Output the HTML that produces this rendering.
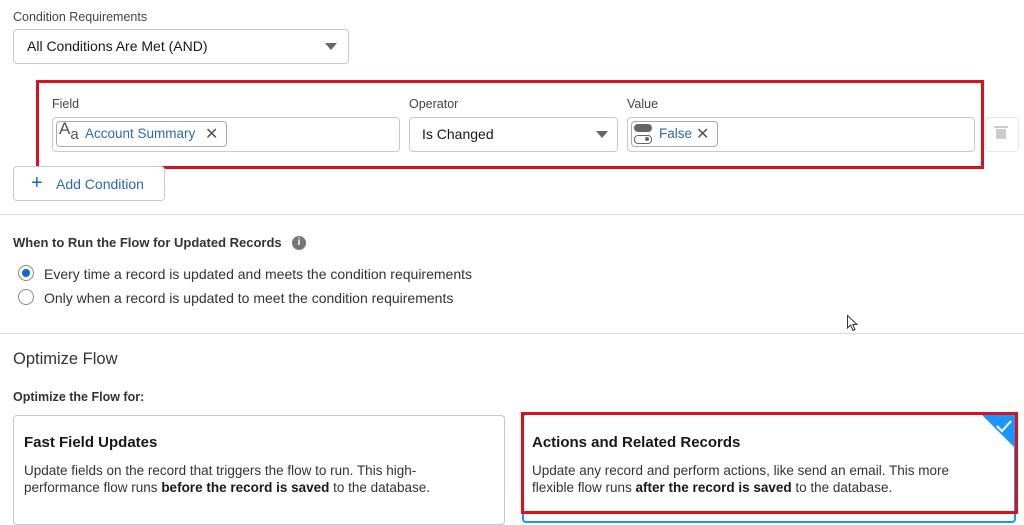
<!DOCTYPE html>
<html><head><style>
body{margin:0;width:1024px;height:520px;overflow:hidden;background:#fff;font-family:"Liberation Sans",sans-serif;color:#181818;position:relative}
.a{position:absolute}
.lbl{font-size:12.5px;color:#444}
.box{border:1px solid #c9c9c9;border-radius:4px;background:#fff;box-sizing:border-box}
.pill{border:1px solid #aaa;border-radius:4px;box-sizing:border-box;font-size:13.5px;color:#2c6aa8}
.arrow{width:0;height:0;border-left:6px solid transparent;border-right:6px solid transparent;border-top:7px solid #666}
.x{color:#555;font-size:16px}
</style></head><body>
<div class="a lbl" style="left:13px;top:10px">Condition Requirements</div>
<div class="a box" style="left:13px;top:29px;width:336px;height:35px"></div>
<div class="a" style="left:27px;top:38px;font-size:14px">All Conditions Are Met (AND)</div>
<div class="a arrow" style="left:325px;top:43px"></div>

<div class="a" style="left:36px;top:80px;width:948px;height:89px;border:3px solid #d9111c;box-sizing:border-box"></div>
<div class="a lbl" style="left:52px;top:97px">Field</div>
<div class="a lbl" style="left:409px;top:97px">Operator</div>
<div class="a lbl" style="left:627px;top:97px">Value</div>
<div class="a box" style="left:52px;top:117px;width:348px;height:35px"></div>
<div class="a pill" style="left:56px;top:121px;width:171px;height:26px"></div>
<div class="a" style="left:59px;top:119px;font-size:17px;color:#555">A<span style="font-size:15px;position:relative;top:5px">a</span></div>
<div class="a" style="left:85px;top:126px;font-size:13.5px;color:#2c6aa8">Account Summary</div>
<div class="a x" style="left:205px;top:124px">✕</div>
<div class="a box" style="left:409px;top:117px;width:209px;height:35px"></div>
<div class="a" style="left:422px;top:126px;font-size:14px">Is Changed</div>
<div class="a arrow" style="left:596px;top:131px"></div>
<div class="a box" style="left:627px;top:117px;width:348px;height:35px"></div>
<div class="a pill" style="left:631px;top:121px;width:87px;height:26px"></div>
<div class="a" style="left:634px;top:124px;width:18px;height:8px;background:#666;border-radius:4px"></div>
<div class="a" style="left:634px;top:135px;width:16px;height:7px;border:1px solid #666;border-radius:4px"></div>
<div class="a" style="left:645px;top:137px;width:4px;height:4px;background:#666;border-radius:2px"></div>
<div class="a" style="left:659px;top:126px;font-size:13.5px;color:#2c6aa8">False</div>
<div class="a x" style="left:696px;top:124px">✕</div>
<div class="a box" style="left:985px;top:117px;width:34px;height:35px;border-color:#e5e5e5"></div>
<div class="a" style="left:996px;top:129px;width:10px;height:10px;background:#ccc;border-radius:1px"></div>
<div class="a" style="left:994px;top:126px;width:14px;height:2px;background:#ccc"></div>

<div class="a box" style="left:13px;top:166px;width:152px;height:35px;border-color:#c9c9c9"></div>
<div class="a" style="left:31px;top:172px;font-size:20px;color:#0b6bc8">+</div>
<div class="a" style="left:56px;top:176px;font-size:14px;color:#2c6aa8">Add Condition</div>

<div class="a" style="left:0;top:214px;width:1024px;height:1px;background:#ddd"></div>
<div class="a" style="left:13px;top:235px;font-size:13px;font-weight:bold;color:#333">When to Run the Flow for Updated Records</div>
<div class="a" style="left:292px;top:236px;width:14px;height:14px;border-radius:50%;background:#777;color:#fff;font-size:10px;text-align:center;line-height:14px;font-weight:bold">i</div>
<div class="a" style="left:18px;top:265px;width:16px;height:16px;border:1px solid #888;border-radius:50%;box-sizing:border-box"></div>
<div class="a" style="left:22px;top:269px;width:8px;height:8px;border-radius:50%;background:#0b6bc8"></div>
<div class="a" style="left:44px;top:266px;font-size:14px;color:#333">Every time a record is updated and meets the condition requirements</div>
<div class="a" style="left:18px;top:289px;width:16px;height:16px;border:1px solid #888;border-radius:50%;box-sizing:border-box"></div>
<div class="a" style="left:44px;top:290px;font-size:14px;color:#333">Only when a record is updated to meet the condition requirements</div>
<svg class="a" style="left:846px;top:314px" width="14" height="18"><path d="M1.5 1.5 L1.5 14 L4.5 11 L7 16.5 L9 15.5 L6.8 10.5 L11 10.5 Z" fill="#fff" stroke="#333" stroke-width="1"/></svg>

<div class="a" style="left:0;top:333px;width:1024px;height:1px;background:#ddd"></div>
<div class="a" style="left:13px;top:350px;font-size:16.5px;color:#333">Optimize Flow</div>
<div class="a" style="left:13px;top:390px;font-size:12.5px;font-weight:bold;color:#333">Optimize the Flow for:</div>

<div class="a box" style="left:13px;top:415px;width:492px;height:110px"></div>
<div class="a" style="left:24px;top:434px;font-size:15px;font-weight:bold">Fast Field Updates</div>
<div class="a" style="left:24px;top:462px;font-size:13.5px;line-height:17px;color:#333;width:470px">Update fields on the record that triggers the flow to run. This high-<br>performance flow runs <b style="color:#181818">before the record is saved</b> to the database.</div>

<div class="a" style="left:522px;top:413px;width:494px;height:110px;border:2px solid #1b96ff;border-radius:4px;box-sizing:border-box"></div>
<div class="a" style="left:982px;top:415px;width:0;height:0;border-left:32px solid transparent;border-top:32px solid #1b96ff"></div>
<svg class="a" style="left:995px;top:419px" width="18" height="14"><path d="M2 7 L7 12 L16 2" stroke="#fff" stroke-width="2" fill="none"/></svg>
<div class="a" style="left:521px;top:412px;width:497px;height:102px;border:3px solid #d9111c;box-sizing:border-box"></div>
<div class="a" style="left:532px;top:434px;font-size:15px;font-weight:bold">Actions and Related Records</div>
<div class="a" style="left:532px;top:462px;font-size:13.5px;line-height:17px;color:#333;width:480px">Update any record and perform actions, like send an email. This more<br>flexible flow runs <b style="color:#181818">after the record is saved</b> to the database.</div>
</body></html>
